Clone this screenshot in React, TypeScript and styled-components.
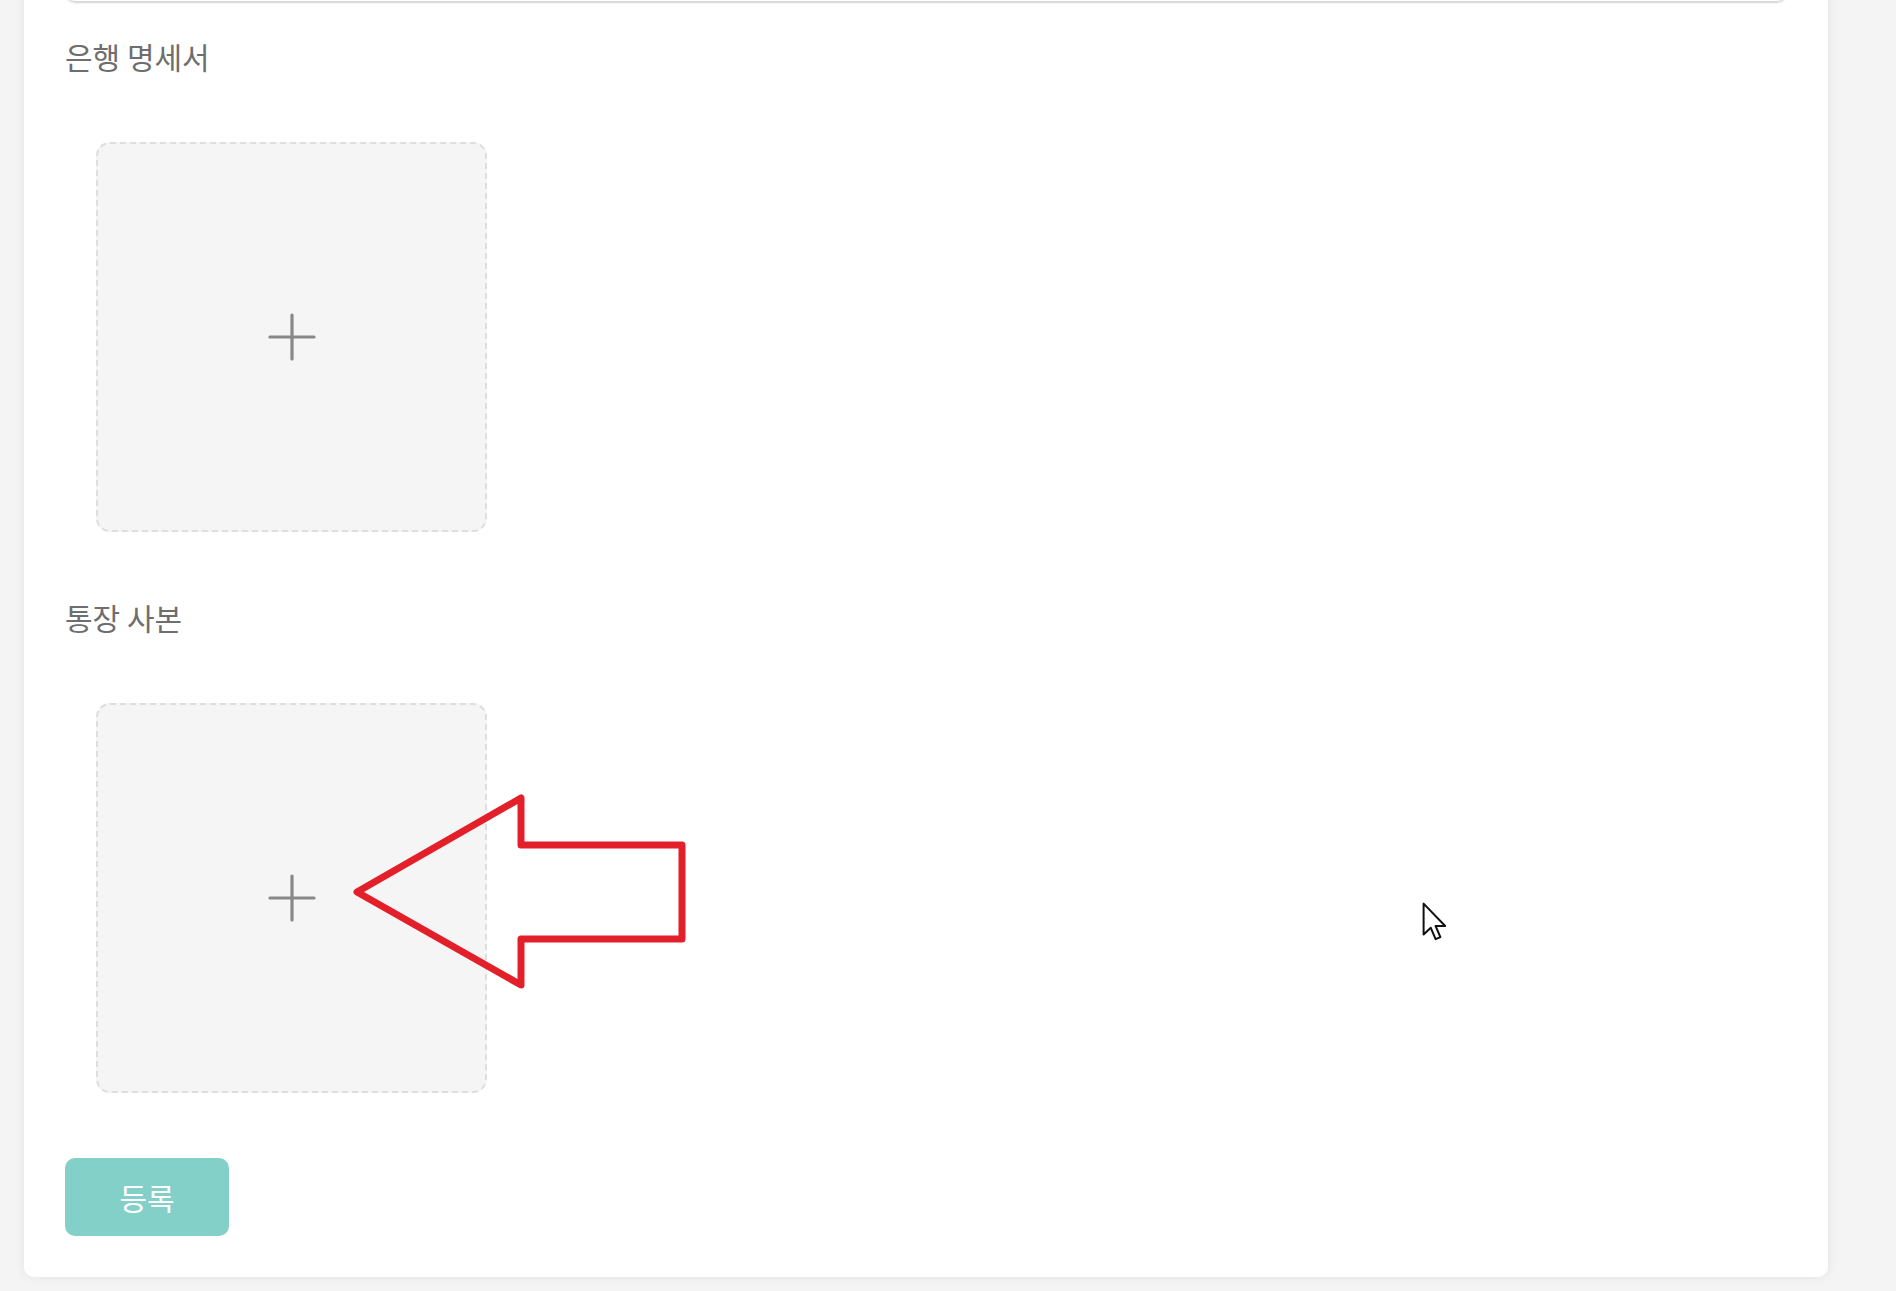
import styled, { createGlobalStyle } from "styled-components";

const GlobalStyle = createGlobalStyle`
  * {
    box-sizing: border-box;
  }

  html,
  body {
    margin: 0;
    padding: 0;
    background-color: #f4f4f4;
    font-family: "Noto Sans CJK KR", "Noto Sans", sans-serif;
    overflow: hidden;
  }
`;

function PlusIcon() {
  return (
    <svg width="50" height="50" viewBox="0 0 50 50" fill="none">
      <path
        d="M25 3v44M3 25h44"
        stroke="#888888"
        strokeWidth="3.2"
        strokeLinecap="round"
      />
    </svg>
  );
}

function PointerArrow() {
  return (
    <ArrowMark width="340" height="205" viewBox="0 0 340 205" fill="none">
      <path
        d="M7 102 L171 8 L171 55 L332 55 L332 149 L171 149 L171 195 Z"
        stroke="#e3202a"
        strokeWidth="7"
        strokeLinejoin="round"
      />
    </ArrowMark>
  );
}

function MouseCursor() {
  return (
    <CursorMark width="26" height="40" viewBox="0 0 13 20" fill="none">
      <path
        d="M0.8 0.8 L0.8 16.2 L4.4 12.9 L6.8 18.6 L9.2 17.6 L6.8 12 L11.6 12 Z"
        fill="#ffffff"
        stroke="#111111"
        strokeWidth="1"
        strokeLinejoin="round"
      />
    </CursorMark>
  );
}

type FieldProps = {
  label: string;
  marked?: boolean;
};

function UploadField({ label, marked }: FieldProps) {
  return (
    <Field>
      <Label>{label}</Label>
      <UploadArea>
        <UploadBox type="button">
          <PlusIcon />
        </UploadBox>
        {marked ? <PointerArrow /> : null}
      </UploadArea>
    </Field>
  );
}

function App() {
  return (
    <>
      <GlobalStyle />
      <Page>
        <Card>
          <PrevInput />
          <UploadField label="은행 명세서" />
          <UploadField label="통장 사본" marked />
          <SubmitButton type="button">등록</SubmitButton>
        </Card>
        <MouseCursor />
      </Page>
    </>
  );
}

export default App;

const Page = styled.div`
  position: relative;
  width: 1896px;
  height: 1291px;
  padding: 0 68px 14px 24px;
  overflow: hidden;
`;

const Card = styled.div`
  display: flex;
  flex-direction: column;
  align-items: flex-start;
  margin-top: -100px;
  padding: 42px 41px 41px;
  background-color: #ffffff;
  border-radius: 10px;
  box-shadow: 0 0 12px rgba(0, 0, 0, 0.07);
`;

const PrevInput = styled.div`
  width: 100%;
  height: 60px;
  margin-bottom: 34px;
  border: 1px solid #d6d6d6;
  border-radius: 10px;
  box-shadow: 0 1px 2px rgba(0, 0, 0, 0.18);
`;

const Field = styled.div`
  display: flex;
  flex-direction: column;
  gap: 66px;
  margin-bottom: 65px;
`;

const Label = styled.div`
  font-size: 30px;
  line-height: 40px;
  color: #6e6e6e;
`;

const UploadArea = styled.div`
  position: relative;
  margin-left: 31px;
`;

const UploadBox = styled.button`
  display: flex;
  justify-content: center;
  align-items: center;
  width: 391px;
  height: 390px;
  padding: 0;
  background-color: #f5f5f5;
  border: 2px dashed #dedede;
  border-radius: 14px;
  cursor: pointer;
`;

const ArrowMark = styled.svg`
  position: absolute;
  left: 254px;
  top: 87px;
`;

const CursorMark = styled.svg`
  position: absolute;
  left: 1422px;
  top: 902px;
`;

const SubmitButton = styled.button`
  width: 164px;
  height: 78px;
  padding: 0;
  background-color: #82d0c8;
  border: none;
  border-radius: 10px;
  color: #ffffff;
  font-family: "Noto Sans CJK KR", "Noto Sans", sans-serif;
  font-size: 30px;
  cursor: pointer;
`;
